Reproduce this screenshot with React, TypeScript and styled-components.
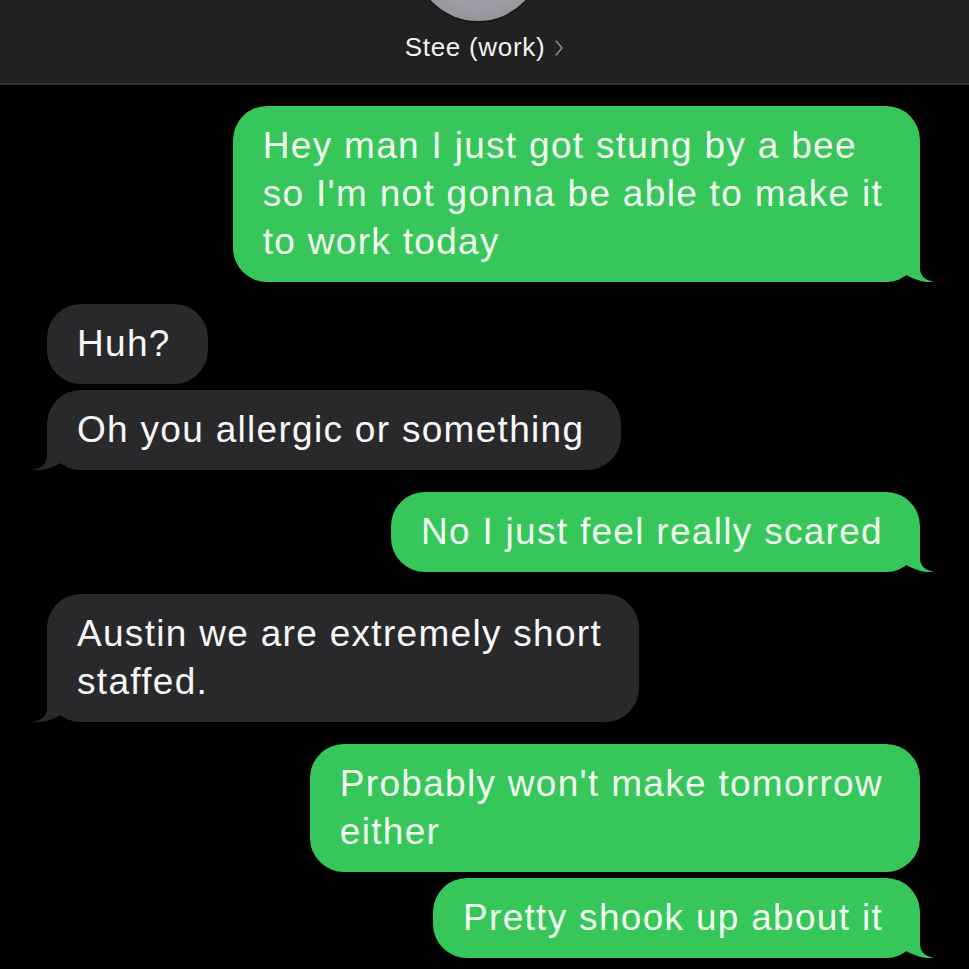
import React from "react";
import styled, { createGlobalStyle } from "styled-components";

const Global = createGlobalStyle`
  html, body { margin: 0; padding: 0; background: #000; }
  body { font-family: "Liberation Sans", Arial, sans-serif; -webkit-font-smoothing: antialiased; }
  * { box-sizing: border-box; }
`;

const Page = styled.div`
  width: 969px;
  height: 969px;
  background: #000;
  overflow: hidden;
  display: flex;
  flex-direction: column;
`;

const Header = styled.header`
  height: 85px;
  background: #212121;
  border-bottom: 2px solid #303030;
  display: flex;
  flex-direction: column;
  align-items: center;
  overflow: hidden;
  flex-shrink: 0;
`;

const Avatar = styled.div`
  width: 128px;
  height: 128px;
  margin-top: -107px;
  margin-left: -14px;
  border-radius: 50%;
  background: radial-gradient(circle at 50% 40%, #a9aab1 0%, #9c9da5 60%, #8a8b92 100%);
  box-shadow: 0 1px 2px rgba(0, 0, 0, 0.6);
  flex-shrink: 0;
`;

const Name = styled.div`
  margin-top: 11px;
  margin-left: 0px;
  display: flex;
  align-items: center;
  gap: 9px;
  color: #f2f2f2;
  font-size: 26px;
  letter-spacing: 0.7px;
  line-height: 30px;
`;

const Chevron = styled.svg`
  width: 10px;
  height: 18px;
  margin-top: 2px;
`;

const Thread = styled.main`
  display: flex;
  flex-direction: column;
  padding: 21px 49px 0 47px;
`;

const Group = styled.div<{ $me?: boolean }>`
  display: flex;
  flex-direction: column;
  align-items: ${(p) => (p.$me ? "flex-end" : "flex-start")};
  gap: 6px;
  margin-bottom: 22px;
`;

const Bubble = styled.div<{ $me?: boolean }>`
  position: relative;
  z-index: 0;
  background: ${(p) => (p.$me ? "#36c65a" : "#29292b")};
  color: ${(p) => (p.$me ? "#f1fff1" : "#f7f7f7")};
  border-radius: 34px;
  padding: 16px 37px 16px 30px;
  font-size: 37px;
  letter-spacing: 1.3px;
  line-height: 48px;
  white-space: pre;
`;

const TailSvg = styled.svg<{ $me?: boolean }>`
  position: absolute;
  bottom: 0;
  width: 55px;
  height: 40px;
  z-index: -1;
  ${(p) =>
    p.$me
      ? "right: -15px;"
      : "left: -15px; transform: scaleX(-1);"}
`;

function Tail({ me }: { me?: boolean }) {
  return (
    <TailSvg $me={me} viewBox="0 0 55 40">
      <path
        d="M40 0 L40 26 C40 33 44 38 54 40 C45 41 35 38 26 33 C18 38 10 40 0 40 L0 0 Z"
        fill={me ? "#36c65a" : "#29292b"}
      />
    </TailSvg>
  );
}

type Msg = { text: string };
type Block = { me: boolean; msgs: Msg[] };

const blocks: Block[] = [
  {
    me: true,
    msgs: [
      {
        text:
          "Hey man I just got stung by a bee\nso I'm not gonna be able to make it\nto work today",
      },
    ],
  },
  { me: false, msgs: [{ text: "Huh?" }, { text: "Oh you allergic or something" }] },
  { me: true, msgs: [{ text: "No I just feel really scared" }] },
  { me: false, msgs: [{ text: "Austin we are extremely short\nstaffed." }] },
  {
    me: true,
    msgs: [
      { text: "Probably won't make tomorrow\neither" },
      { text: "Pretty shook up about it" },
    ],
  },
];

export default function App() {
  return (
    <Page>
      <Global />
      <Header>
        <Avatar />
        <Name>
          Stee (work)
          <Chevron viewBox="0 0 10 18">
            <path d="M2 2 L8 9 L2 16" fill="none" stroke="#8a8a8e" strokeWidth="1.6" strokeLinecap="round" strokeLinejoin="round" />
          </Chevron>
        </Name>
      </Header>
      <Thread>
        {blocks.map((b, i) => (
          <Group key={i} $me={b.me}>
            {b.msgs.map((m, j) => (
              <Bubble key={j} $me={b.me}>
                {m.text}
                {j === b.msgs.length - 1 && <Tail me={b.me} />}
              </Bubble>
            ))}
          </Group>
        ))}
      </Thread>
    </Page>
  );
}
